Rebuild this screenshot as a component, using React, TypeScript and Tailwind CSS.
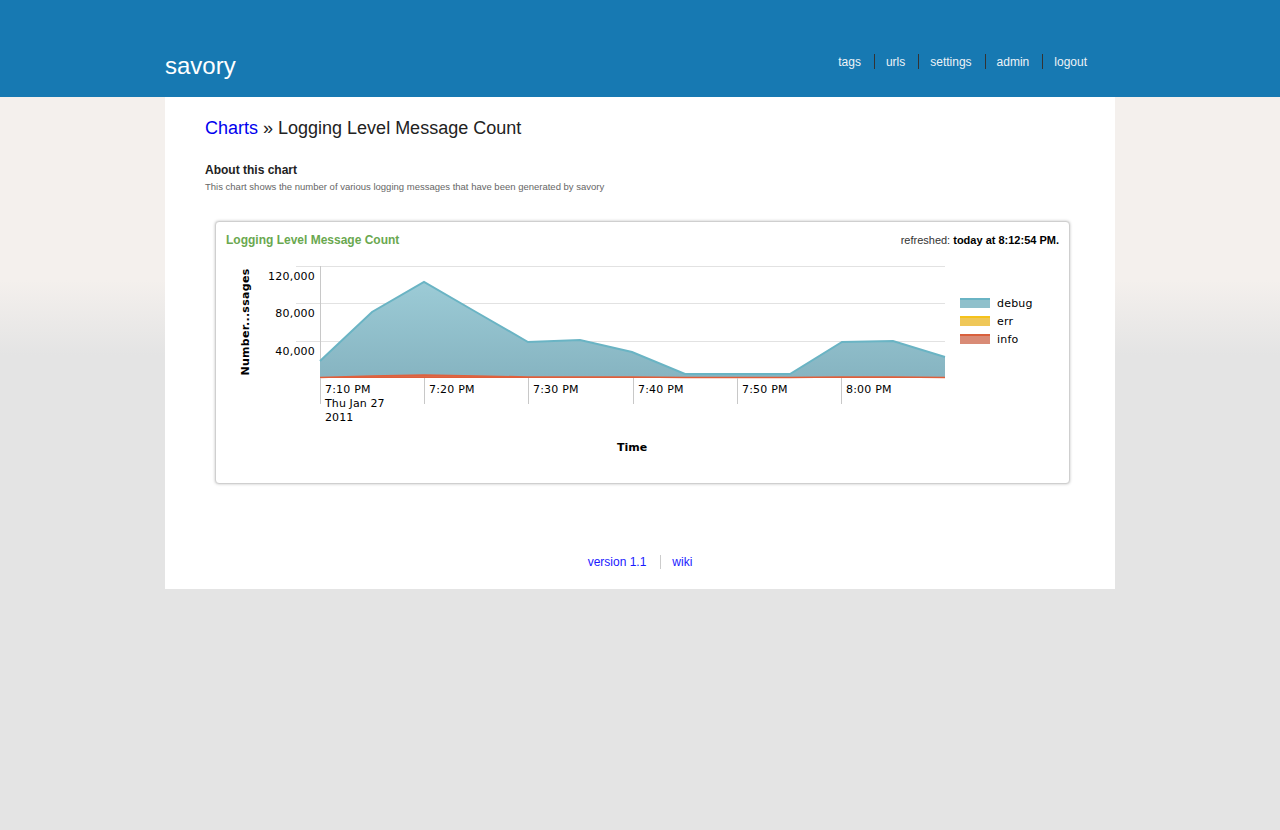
const navLinks = ['tags', 'urls', 'settings', 'admin', 'logout'];

// page coords minus svg origin (216, 255)
const debugPts: [number, number][] = [
    [104, 106], [156, 57], [208, 27], [260, 57], [312, 87], [364, 85], [416, 97],
    [469, 119], [521, 119], [574, 119], [626, 87], [677, 86], [729, 102],
];
const infoPts: [number, number][] = [
    [104, 122.5], [156, 121], [208, 120], [260, 121], [312, 122], [364, 122], [416, 122],
    [469, 122.5], [521, 122.5], [574, 122.5], [626, 122], [677, 122], [729, 122.5],
];
const baseY = 123;
const ticks = [
    { x: 104, label: '7:10 PM' },
    { x: 208, label: '7:20 PM' },
    { x: 312, label: '7:30 PM' },
    { x: 417, label: '7:40 PM' },
    { x: 521, label: '7:50 PM' },
    { x: 625, label: '8:00 PM' },
];
const yLabels = [
    { y: 11, label: '120,000' },
    { y: 48, label: '80,000' },
    { y: 86, label: '40,000' },
];
const legend = [
    { y: 43, name: 'debug', fill: '#8fc0cb', top: '#6ab4c4' },
    { y: 61, name: 'err', fill: '#efc758', top: '#f5c21b' },
    { y: 79, name: 'info', fill: '#d98b76', top: '#d9603d' },
];

const areaPath = (pts: [number, number][]) =>
    `M${pts[0][0]},${baseY} ` + pts.map(([x, y]) => `L${x},${y}`).join(' ') + ` L${pts[pts.length - 1][0]},${baseY} Z`;
const linePath = (pts: [number, number][]) => 'M' + pts.map(([x, y]) => `${x},${y}`).join(' L');

const ChartSvg = () => (
    <svg width={853} height={228} className="block" style={{ fontFamily: '"DejaVu Sans", sans-serif' }}>
        <defs>
            <linearGradient id="debugFill" x1="0" y1="0" x2="0" y2="1">
                <stop offset="0" stopColor="#9ccbd6" />
                <stop offset="1" stopColor="#86b4c1" />
            </linearGradient>
        </defs>

        {/* Grid */}
        {yLabels.map((l) => (
            <line key={l.y} x1={80} x2={729} y1={l.y + 0.5} y2={l.y + 0.5} stroke="#e2e2e2" />
        ))}
        <line x1={104.5} x2={104.5} y1={11} y2={baseY} stroke="#c8c8c8" />

        {/* Areas */}
        <path d={areaPath(debugPts)} fill="url(#debugFill)" />
        <path d={linePath(debugPts)} fill="none" stroke="#6ab4c4" strokeWidth={2} />
        <path d={areaPath(infoPts)} fill="#d9694a" />
        <path d={linePath(infoPts)} fill="none" stroke="#e0603c" strokeWidth={1.5} />
        <line x1={104} x2={729} y1={baseY - 0.5} y2={baseY - 0.5} stroke="#df5e3a" />

        {/* Y labels */}
        {yLabels.map((l) => (
            <text key={l.label} x={99} y={l.y + 14} fontSize={11} textAnchor="end" fill="#000" letterSpacing={0.2}>
                {l.label}
            </text>
        ))}

        {/* X ticks */}
        {ticks.map((t) => (
            <g key={t.label}>
                <line x1={t.x + 0.5} x2={t.x + 0.5} y1={baseY} y2={149} stroke="#c8c8c8" />
                <text x={t.x + 5} y={138} fontSize={11} fill="#000" letterSpacing={0.2}>{t.label}</text>
            </g>
        ))}
        <text x={109} y={152} fontSize={11} fill="#000" letterSpacing={0.1}>Thu Jan 27</text>
        <text x={109} y={166} fontSize={11} fill="#000" letterSpacing={0.1}>2011</text>

        {/* Axis titles */}
        <text x={416} y={196} fontSize={11} fontWeight="bold" textAnchor="middle" fill="#000">Time</text>
        <text
            x={0}
            y={0}
            fontSize={11}
            fontWeight="bold"
            textAnchor="middle"
            fill="#000"
            transform="translate(33,67) rotate(-90)"
            letterSpacing={0.3}
        >
            Number...ssages
        </text>

        {/* Legend */}
        {legend.map((l) => (
            <g key={l.name}>
                <rect x={744} y={l.y} width={30} height={10} fill={l.fill} />
                <rect x={744} y={l.y} width={30} height={2} fill={l.top} />
                <text x={781} y={l.y + 9} fontSize={11} fill="#000" letterSpacing={0.2}>{l.name}</text>
            </g>
        ))}
    </svg>
);

export default function App() {
    return (
        <div
            className="min-h-[830px] bg-[linear-gradient(to_bottom,#f4f0ed_0px,#f4f0ed_280px,#e4e4e4_355px,#e4e4e4_100%)]"
            style={{ fontFamily: '"Liberation Sans", Arial, sans-serif' }}
        >
            {/* Header */}
            <div className="h-[97px] bg-[#1779b2]">
                <div className="w-[950px] mx-auto flex items-end justify-between h-full pb-[17px]">
                    <div className="text-[24px] leading-[28px] text-white">savory</div>
                    <nav className="flex items-center pr-[15px] mb-[11px]">
                        {navLinks.map((link, i) => (
                            <div key={link} className="flex items-center">
                                {i > 0 && <span className="w-px h-[15px] bg-[#333]" />}
                                <a className="text-[12px] leading-[14px] text-[#eef3f7] pl-[11px] pr-[13px]">{link}</a>
                            </div>
                        ))}
                    </nav>
                </div>
            </div>

            {/* Content */}
            <div className="w-[950px] mx-auto bg-white px-[40px] pt-[19px] pb-[20px]">
                <h1 className="text-[18px] leading-[24px] text-[#222]">
                    <a className="text-[#0000ee]">Charts</a> » Logging Level Message Count
                </h1>

                <div className="mt-[23px]">
                    <div className="text-[12px] leading-[14px] font-bold text-[#222]">About this chart</div>
                    <div className="text-[9.5px] leading-[12px] text-[#666] mt-[4px]">
                        This chart shows the number of various logging messages that have been generated by savory
                    </div>
                </div>

                {/* Chart card */}
                <div className="mt-[28px] ml-[10px] w-[855px] h-[263px] border border-[#cfcfcf] rounded-[4px] shadow-[0_0_3px_rgba(0,0,0,0.25)] bg-white">
                    <div className="flex justify-between items-center px-[10px] pt-[10px] h-[25px]">
                        <span className="text-[12px] leading-[14px] font-bold text-[#6aa84f]">Logging Level Message Count</span>
                        <span className="text-[11px] leading-[14px] text-[#333]">
                            refreshed: <b className="text-black">today at 8:12:54 PM.</b>
                        </span>
                    </div>
                    <div className="mt-[8px]">
                        <ChartSvg />
                    </div>
                </div>

                {/* Footer */}
                <div className="mt-[71px] flex justify-center items-center text-[12px] leading-[14px]">
                    <a className="text-[#1a1aff] pr-[14px]">version 1.1</a>
                    <span className="w-px h-[14px] bg-[#ccc]" />
                    <a className="text-[#1a1aff] pl-[11px]">wiki</a>
                </div>
            </div>
        </div>
    );
}
